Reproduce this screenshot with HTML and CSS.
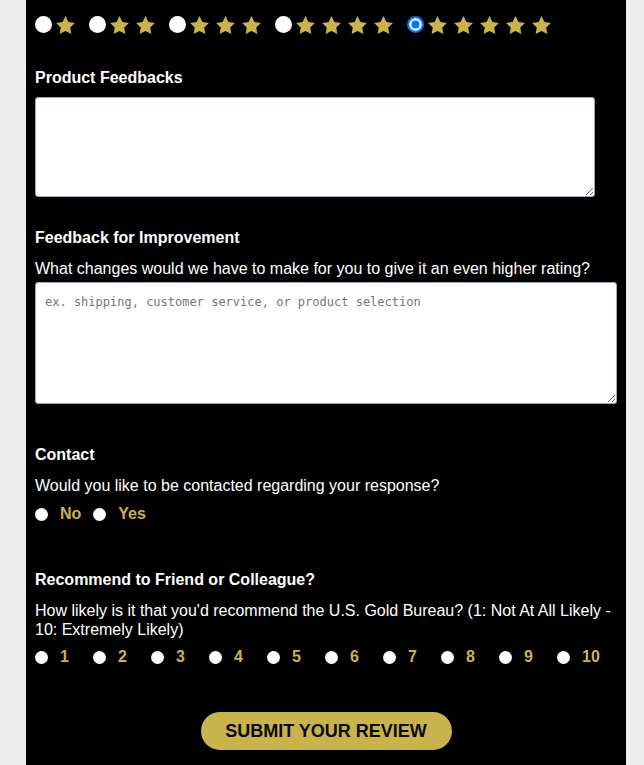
FILE: index.html
```html
<!DOCTYPE html>
<html lang="en">
<head>
<meta charset="utf-8">
<title>Review</title>
<link rel="stylesheet" href="styles.css">
</head>
<body>
<form class="panel">
  <div class="rating">
    <label class="rate-opt"><input type="radio" name="rating" class="radio-lg"><span class="stars"><svg class="star" viewBox="2 2 20 19.02"><polygon points="12,2 15.09,8.26 22,9.27 17,14.14 18.18,21.02 12,17.77 5.82,21.02 7,14.14 2,9.27 8.91,8.26"/></svg></span></label>
    <label class="rate-opt"><input type="radio" name="rating" class="radio-lg"><span class="stars"><svg class="star" viewBox="2 2 20 19.02"><polygon points="12,2 15.09,8.26 22,9.27 17,14.14 18.18,21.02 12,17.77 5.82,21.02 7,14.14 2,9.27 8.91,8.26"/></svg><svg class="star" viewBox="2 2 20 19.02"><polygon points="12,2 15.09,8.26 22,9.27 17,14.14 18.18,21.02 12,17.77 5.82,21.02 7,14.14 2,9.27 8.91,8.26"/></svg></span></label>
    <label class="rate-opt"><input type="radio" name="rating" class="radio-lg"><span class="stars"><svg class="star" viewBox="2 2 20 19.02"><polygon points="12,2 15.09,8.26 22,9.27 17,14.14 18.18,21.02 12,17.77 5.82,21.02 7,14.14 2,9.27 8.91,8.26"/></svg><svg class="star" viewBox="2 2 20 19.02"><polygon points="12,2 15.09,8.26 22,9.27 17,14.14 18.18,21.02 12,17.77 5.82,21.02 7,14.14 2,9.27 8.91,8.26"/></svg><svg class="star" viewBox="2 2 20 19.02"><polygon points="12,2 15.09,8.26 22,9.27 17,14.14 18.18,21.02 12,17.77 5.82,21.02 7,14.14 2,9.27 8.91,8.26"/></svg></span></label>
    <label class="rate-opt"><input type="radio" name="rating" class="radio-lg"><span class="stars"><svg class="star" viewBox="2 2 20 19.02"><polygon points="12,2 15.09,8.26 22,9.27 17,14.14 18.18,21.02 12,17.77 5.82,21.02 7,14.14 2,9.27 8.91,8.26"/></svg><svg class="star" viewBox="2 2 20 19.02"><polygon points="12,2 15.09,8.26 22,9.27 17,14.14 18.18,21.02 12,17.77 5.82,21.02 7,14.14 2,9.27 8.91,8.26"/></svg><svg class="star" viewBox="2 2 20 19.02"><polygon points="12,2 15.09,8.26 22,9.27 17,14.14 18.18,21.02 12,17.77 5.82,21.02 7,14.14 2,9.27 8.91,8.26"/></svg><svg class="star" viewBox="2 2 20 19.02"><polygon points="12,2 15.09,8.26 22,9.27 17,14.14 18.18,21.02 12,17.77 5.82,21.02 7,14.14 2,9.27 8.91,8.26"/></svg></span></label>
    <label class="rate-opt"><input type="radio" name="rating" class="radio-lg" checked><span class="stars"><svg class="star" viewBox="2 2 20 19.02"><polygon points="12,2 15.09,8.26 22,9.27 17,14.14 18.18,21.02 12,17.77 5.82,21.02 7,14.14 2,9.27 8.91,8.26"/></svg><svg class="star" viewBox="2 2 20 19.02"><polygon points="12,2 15.09,8.26 22,9.27 17,14.14 18.18,21.02 12,17.77 5.82,21.02 7,14.14 2,9.27 8.91,8.26"/></svg><svg class="star" viewBox="2 2 20 19.02"><polygon points="12,2 15.09,8.26 22,9.27 17,14.14 18.18,21.02 12,17.77 5.82,21.02 7,14.14 2,9.27 8.91,8.26"/></svg><svg class="star" viewBox="2 2 20 19.02"><polygon points="12,2 15.09,8.26 22,9.27 17,14.14 18.18,21.02 12,17.77 5.82,21.02 7,14.14 2,9.27 8.91,8.26"/></svg><svg class="star" viewBox="2 2 20 19.02"><polygon points="12,2 15.09,8.26 22,9.27 17,14.14 18.18,21.02 12,17.77 5.82,21.02 7,14.14 2,9.27 8.91,8.26"/></svg></span></label>
  </div>

  <h2 class="q-title t-feedback">Product Feedbacks</h2>
  <textarea class="box box-short"></textarea>

  <h2 class="q-title t-improve">Feedback for Improvement</h2>
  <p class="q-text">What changes would we have to make for you to give it an even higher rating?</p>
  <textarea class="box box-wide" placeholder="ex. shipping, customer service, or product selection"></textarea>

  <h2 class="q-title t-contact">Contact</h2>
  <p class="q-text">Would you like to be contacted regarding your response?</p>
  <div class="choice-row">
    <input type="radio" name="contact" class="radio-sm" id="c-no"><label for="c-no" class="opt-label">No</label>
    <input type="radio" name="contact" class="radio-sm" id="c-yes"><label for="c-yes" class="opt-label">Yes</label>
  </div>

  <h2 class="q-title t-recommend">Recommend to Friend or Colleague?</h2>
  <p class="q-text">How likely is it that you'd recommend the U.S. Gold Bureau? (1: Not At All Likely - 10: Extremely Likely)</p>
  <div class="scale-row">
    <label class="scale-opt"><input type="radio" name="nps" class="radio-sm"><span class="opt-label">1</span></label>
    <label class="scale-opt"><input type="radio" name="nps" class="radio-sm"><span class="opt-label">2</span></label>
    <label class="scale-opt"><input type="radio" name="nps" class="radio-sm"><span class="opt-label">3</span></label>
    <label class="scale-opt"><input type="radio" name="nps" class="radio-sm"><span class="opt-label">4</span></label>
    <label class="scale-opt"><input type="radio" name="nps" class="radio-sm"><span class="opt-label">5</span></label>
    <label class="scale-opt"><input type="radio" name="nps" class="radio-sm"><span class="opt-label">6</span></label>
    <label class="scale-opt"><input type="radio" name="nps" class="radio-sm"><span class="opt-label">7</span></label>
    <label class="scale-opt"><input type="radio" name="nps" class="radio-sm"><span class="opt-label">8</span></label>
    <label class="scale-opt"><input type="radio" name="nps" class="radio-sm"><span class="opt-label">9</span></label>
    <label class="scale-opt"><input type="radio" name="nps" class="radio-sm"><span class="opt-label">10</span></label>
  </div>

  <div class="submit-wrap">
    <button type="button" class="submit-btn">SUBMIT YOUR REVIEW</button>
  </div>
</form>
</body>
</html>
```

FILE: styles.css
```css
* {
  box-sizing: border-box;
}

html, body {
  margin: 0;
  padding: 0;
}

body {
  background: #eeeeee;
  font-family: "Liberation Sans", Arial, sans-serif;
  color: #ffffff;
}

.panel {
  display: flex;
  flex-direction: column;
  align-items: flex-start;
  width: 600px;
  min-height: 100vh;
  margin: 0 0 0 26px;
  padding: 15px 9px 20px;
  background: #000000;
}

/* star rating */
.rating {
  display: flex;
  align-items: center;
  height: 18px;
}

.rate-opt {
  display: flex;
  align-items: center;
  gap: 4px;
  margin-right: 14px;
}

.stars {
  display: flex;
  gap: 7px;
  margin-top: 1px;
}

.star {
  width: 19px;
  height: 18px;
  display: block;
  fill: #c8b44a;
}

input[type="radio"] {
  appearance: none;
  -webkit-appearance: none;
  margin: 0;
  flex: none;
  background: #ffffff;
  border-radius: 50%;
}

.radio-lg {
  width: 17px;
  height: 17px;
}

.radio-lg:checked {
  background: #0075ff;
  border: 2px solid #0075ff;
  box-shadow: inset 0 0 0 2.5px #ffffff;
}

.radio-sm {
  width: 13px;
  height: 13px;
}

/* questions */
.q-title {
  margin: 0;
  padding-top: 1px;
  font-size: 16px;
  line-height: 18px;
  font-weight: 700;
  color: #ffffff;
}

.t-feedback { margin-top: 35px; }
.t-improve { margin-top: 31px; }
.t-contact { margin-top: 41px; }
.t-recommend { margin-top: 47px; }

.q-text {
  margin: 12px 0 0;
  font-size: 16px;
  line-height: 19px;
  color: #ffffff;
}

.box {
  display: block;
  margin: 0;
  background: #ffffff;
  border: 1px solid #9ba4c6;
  border-radius: 3px;
  padding: 12px 9px 9px;
  font-family: "DejaVu Sans Mono", "Liberation Mono", monospace;
  font-size: 12px;
  line-height: 14px;
  color: #333333;
}

.box::placeholder {
  color: #757575;
}

.box-short {
  width: 560px;
  height: 100px;
  margin-top: 10px;
}

.box-wide {
  width: 582px;
  height: 122px;
  margin-top: 4px;
}

/* choices */
.choice-row {
  display: flex;
  align-items: center;
  gap: 12px;
  height: 18px;
  margin-top: 10px;
}

.opt-label {
  font-size: 16px;
  line-height: 18px;
  font-weight: 700;
  color: #c8b44a;
}

.scale-row {
  display: flex;
  align-items: center;
  height: 18px;
  margin-top: 9px;
}

.scale-opt {
  display: flex;
  align-items: center;
  gap: 12px;
  width: 58px;
}

.submit-wrap {
  align-self: stretch;
  display: flex;
  justify-content: center;
  margin-top: 46px;
}

.submit-btn {
  width: 251px;
  height: 38px;
  border: none;
  border-radius: 19px;
  background: #c8b44a;
  color: #0a0a0a;
  font-family: "Liberation Sans", Arial, sans-serif;
  font-size: 18px;
  font-weight: 700;
  padding: 0;
  cursor: pointer;
}
```
